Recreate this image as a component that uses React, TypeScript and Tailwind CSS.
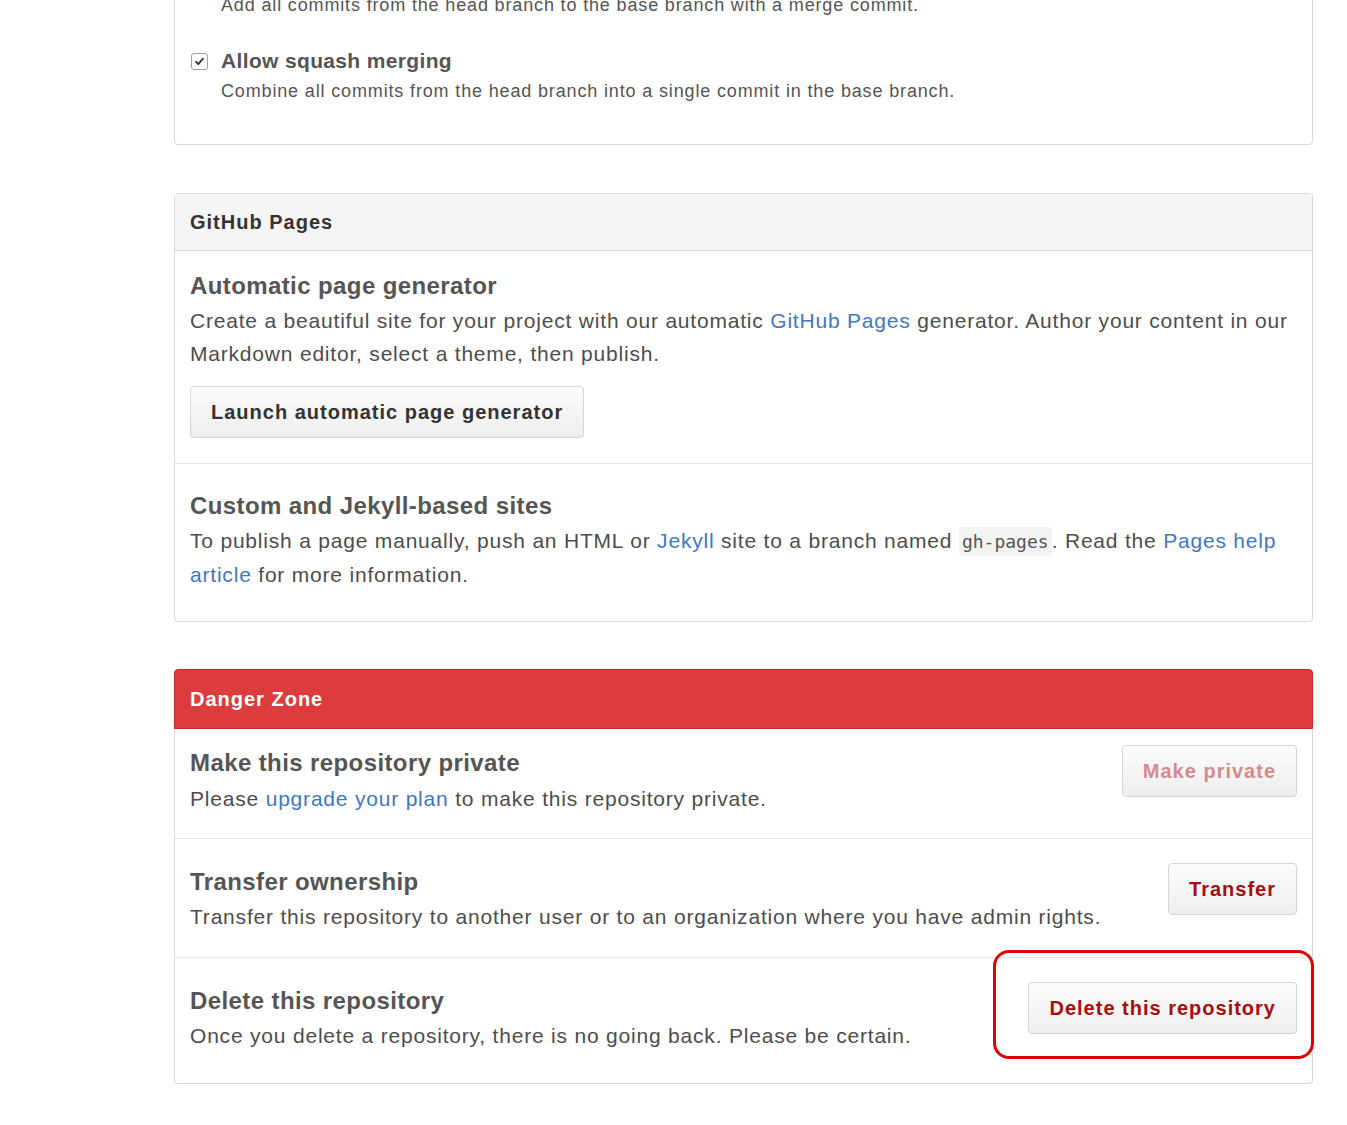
import React from "react";

const font = { fontFamily: '"Liberation Sans", Arial, Helvetica, sans-serif' };

function Btn({ children, className = "" }: { children: React.ReactNode; className?: string }) {
  return (
    <button
      className={
        "h-[52px] shrink-0 rounded-[4px] border border-[#d5d5d5] bg-gradient-to-b from-[#fcfcfc] to-[#eeeeee] pl-[20px] pr-[20px] text-[20px] font-bold leading-[50px] tracking-[1px] " +
        className
      }
    >
      {children}
    </button>
  );
}

const body = "text-[21px] leading-[33px] tracking-[0.8px]";
const h3 = "text-[24px] font-bold leading-[33px] tracking-[0.4px] text-[#555]";

export default function App() {
  return (
    <div className="min-h-[1125px] w-[1347px] overflow-hidden bg-white text-[#4d4d4d]" style={font}>
      <div className="ml-[174px] w-[1139px]">
        {/* Merge options box (cut at top) */}
        <div className="-mt-[31px] rounded-[4px] border border-[#d8d8d8] pl-[46px] pr-4 pt-[19px] pb-[39px]">
          <div className="text-[18px] leading-[33px] tracking-[0.85px] text-[#555]">
            Add all commits from the head branch to the base branch with a merge commit.
          </div>
          <div className="relative mt-[24px]">
            <span className="absolute -left-[30px] top-[7px] flex h-[17px] w-[17px] items-center justify-center rounded-[3px] border border-[#a0a0a0] bg-white">
              <svg width="11" height="11" viewBox="0 0 11 11">
                <path d="M2 5.8 L4.3 8.2 L9 2.6" fill="none" stroke="#333" strokeWidth="1.8" strokeLinecap="round" strokeLinejoin="round" />
              </svg>
            </span>
            <div className="text-[21px] font-bold leading-[30px] tracking-[0.35px] text-[#555]">Allow squash merging</div>
            <div className="mt-[1px] text-[18px] leading-[28px] tracking-[0.85px] text-[#555]">
              Combine all commits from the head branch into a single commit in the base branch.
            </div>
          </div>
        </div>

        {/* GitHub Pages */}
        <div className="mt-[48px] rounded-[4px] border border-[#d8d8d8]">
          <div className="h-[57px] border-b border-[#d8d8d8] bg-[#f5f5f5] px-[15px] text-[20px] font-bold leading-[56px] tracking-[1px] text-[#333]">
            GitHub Pages
          </div>
          <div className="border-b border-[#e5e5e5] px-[15px] pt-[18px] pb-[25px]">
            <div className={h3}>Automatic page generator</div>
            <p className={"mt-[2px] " + body}>
              Create a beautiful site for your project with our automatic{" "}
              <a className="text-[#4078c0]">GitHub Pages</a> generator. Author your content in our Markdown editor,
              select a theme, then publish.
            </p>
            <Btn className="mt-[16px] text-[#333]">Launch automatic page generator</Btn>
          </div>
          <div className="px-[15px] pt-[25px] pb-[30px]">
            <div className={h3}>Custom and Jekyll-based sites</div>
            <p className={"mt-[2px] " + body}>
              To publish a page manually, push an HTML or <a className="text-[#4078c0]">Jekyll</a> site to a branch
              named{" "}
              <code
                className="rounded-[3px] bg-[#f3f3f3] px-[3px] py-[4px] text-[18px] tracking-normal text-[#555]"
                style={{ fontFamily: '"DejaVu Sans Mono", "Liberation Mono", monospace' }}
              >
                gh-pages
              </code>
              . Read the <a className="text-[#4078c0]">Pages help article</a> for more information.
            </p>
          </div>
        </div>

        {/* Danger Zone */}
        <div className="mt-[47px]">
          <div className="h-[60px] rounded-t-[4px] border border-[#c52a2a] bg-[#dc3c3c] px-[15px] text-[20px] font-bold leading-[58px] tracking-[1px] text-white">
            Danger Zone
          </div>
          <div className="rounded-b-[4px] border-x border-b border-[#d8d8d8]">
            <div className="flex items-start justify-between border-b border-[#e5e5e5] px-[15px] pt-[16px] pb-[23px]">
              <div className="pt-[1px]">
                <div className={h3}>Make this repository private</div>
                <p className={"mt-[3px] " + body}>
                  Please <a className="text-[#4078c0]">upgrade your plan</a> to make this repository private.
                </p>
              </div>
              <Btn className="text-[#d58b8b]">Make private</Btn>
            </div>
            <div className="flex items-start justify-between border-b border-[#e5e5e5] px-[15px] pt-[24px] pb-[24px]">
              <div className="pt-[2px]">
                <div className={h3}>Transfer ownership</div>
                <p className={"mt-[2px] " + body}>
                  Transfer this repository to another user or to an organization where you have admin rights.
                </p>
              </div>
              <Btn className="text-[#a40e0e]">Transfer</Btn>
            </div>
            <div className="relative flex items-start justify-between px-[15px] pt-[24px] pb-[31px]">
              <div className="pt-[2px]">
                <div className={h3}>Delete this repository</div>
                <p className={"mt-[2px] " + body}>
                  Once you delete a repository, there is no going back. Please be certain.
                </p>
              </div>
              <Btn className="text-[#a40e0e]">Delete this repository</Btn>
              <div className="pointer-events-none absolute left-[818px] top-[-8px] h-[109px] w-[321px] rounded-[16px] border-[3px] border-[#e00000]" />
            </div>
          </div>
        </div>
      </div>
    </div>
  );
}
